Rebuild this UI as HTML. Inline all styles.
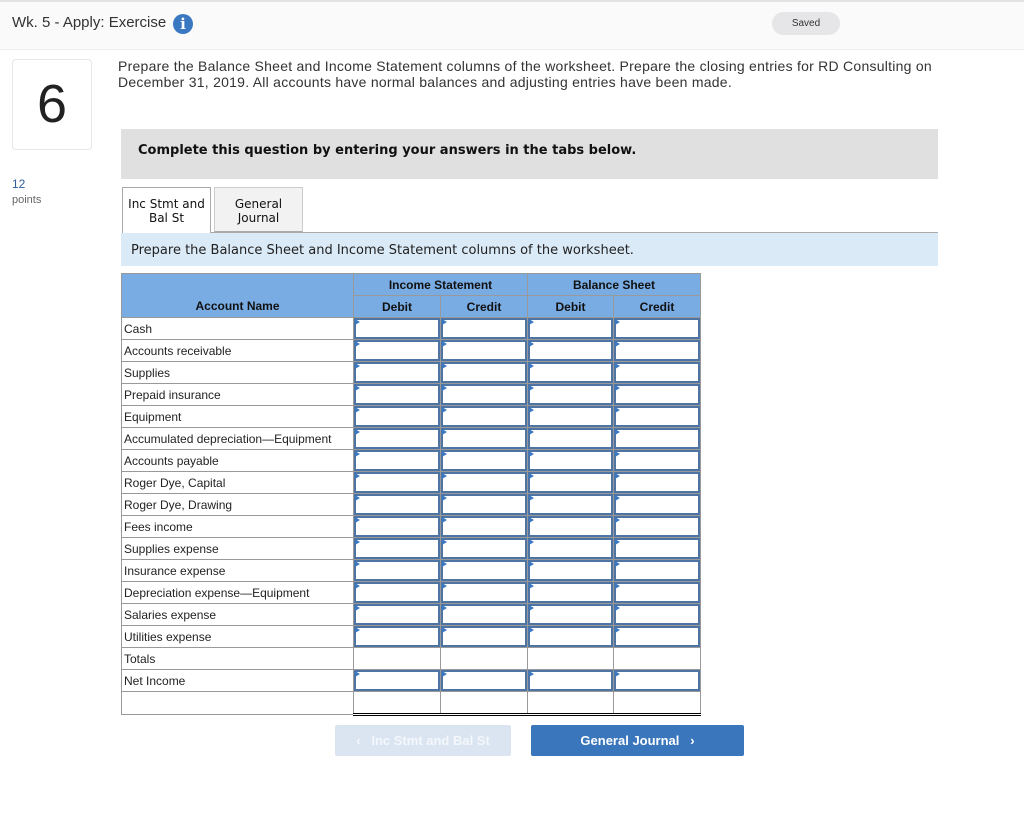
<!DOCTYPE html>
<html><head><meta charset="utf-8"><style>
body{margin:0;width:1024px;height:831px;background:#fff;font-family:"Liberation Sans",Arial,sans-serif;position:relative;overflow:hidden}
.hdr{position:absolute;left:0;top:0;width:1024px;height:47px;background:#fafafa;border-top:2px solid #e2e2e2;border-bottom:1px solid #eee}
.title{position:absolute;left:12px;top:14px;font-size:15px;color:#333}
.info{position:absolute;left:173px;top:14px;width:20px;height:20px;border-radius:50%;background:#3b78c2;color:#fff;font:bold 15px "DejaVu Serif",serif;text-align:center;line-height:20px}
.saved{position:absolute;left:772px;top:12px;width:68px;height:23px;border-radius:12px;background:#e6e6e8;font-size:10px;color:#333;text-align:center;line-height:23px}
.qbox{position:absolute;left:12px;top:59px;width:78px;height:89px;border:1px solid #e6e6e6;border-radius:4px;font-size:54px;color:#222;text-align:center;line-height:89px}
.pts{position:absolute;left:12px;top:177px;font-size:12px;color:#2f5d9a}
.pts span{display:block;color:#666;font-size:11px;margin-top:3px}
.q{position:absolute;left:118px;top:58px;width:850px;font-size:14px;line-height:16px;color:#333;letter-spacing:0.25px}
.banner{position:absolute;left:121px;top:129px;width:817px;height:50px;background:#e0e0e0;font:bold 13px "DejaVu Sans",Verdana,sans-serif;color:#111;line-height:43px;text-indent:17px}
.tab{position:absolute;top:187px;height:45px;font:12px "DejaVu Sans",Verdana,sans-serif;text-align:center;line-height:14px;box-sizing:border-box;padding-top:9px;color:#111}
.t1{left:122px;width:89px;border:1px solid #aaa;border-bottom:none;background:#fff;height:46px}
.t2{left:214px;width:89px;border:1px solid #ccc;background:#f2f2f2;border-bottom:1px solid #aaa}
.tabline{position:absolute;left:211px;top:232px;width:727px;height:1px;background:#aaa}
.bar{position:absolute;left:121px;top:233px;width:817px;height:33px;background:#dbeaf7;font:13px "DejaVu Sans",Verdana,sans-serif;color:#222;line-height:35px;text-indent:10px}
table{position:absolute;left:121px;top:273px;border-collapse:collapse;table-layout:fixed;font-size:12px;color:#222}
td,th{border:1px solid #999;height:21px;padding:0;box-sizing:content-box}
th{background:#78ace3;font-weight:bold;font-size:12px;color:#111}
td.n{padding-left:2px}
td.i{position:relative}
td.i div{position:absolute;left:0;top:0;right:0;bottom:0;border:2px solid #4d74a3}
td.i div:before{content:"";position:absolute;left:-1px;top:-1px;border-left:5px solid #3b78c2;border-top:3px solid transparent;border-bottom:3px solid transparent}
tr.last td.e{border-bottom:3px double #000}
.btn{position:absolute;top:725px;height:31px;font:bold 13px "Liberation Sans",Arial,sans-serif;color:#fff;text-align:center;line-height:31px;border-radius:2px}
.prev{left:335px;width:176px;background:#dbe5f1;color:#f4f7fb}
.next{left:531px;width:213px;background:#3a76bc}
</style></head><body>
<div class="hdr"></div>
<div class="title">Wk. 5 - Apply: Exercise</div>
<div class="info">i</div>
<div class="saved">Saved</div>
<div class="qbox">6</div>
<div class="pts">12<span>points</span></div>
<div class="q">Prepare the Balance Sheet and Income Statement columns of the worksheet. Prepare the closing entries for RD Consulting on December 31, 2019. All accounts have normal balances and adjusting entries have been made.</div>
<div class="banner">Complete this question by entering your answers in the tabs below.</div>
<div class="tab t2">General<br>Journal</div>
<div class="tabline"></div>
<div class="tab t1">Inc Stmt and<br>Bal St</div>
<div class="bar">Prepare the Balance Sheet and Income Statement columns of the worksheet.</div>
<table>
<colgroup><col style="width:232px"><col style="width:87px"><col style="width:87px"><col style="width:86px"><col style="width:87px"></colgroup>
<tr><th style="border-bottom:none"></th><th colspan="2">Income Statement</th><th colspan="2">Balance Sheet</th></tr>
<tr><th style="border-top:none">Account Name</th><th>Debit</th><th>Credit</th><th>Debit</th><th>Credit</th></tr>
<tr><td class="n">Cash</td><td class="i"><div></div></td><td class="i"><div></div></td><td class="i"><div></div></td><td class="i"><div></div></td></tr>
<tr><td class="n">Accounts receivable</td><td class="i"><div></div></td><td class="i"><div></div></td><td class="i"><div></div></td><td class="i"><div></div></td></tr>
<tr><td class="n">Supplies</td><td class="i"><div></div></td><td class="i"><div></div></td><td class="i"><div></div></td><td class="i"><div></div></td></tr>
<tr><td class="n">Prepaid insurance</td><td class="i"><div></div></td><td class="i"><div></div></td><td class="i"><div></div></td><td class="i"><div></div></td></tr>
<tr><td class="n">Equipment</td><td class="i"><div></div></td><td class="i"><div></div></td><td class="i"><div></div></td><td class="i"><div></div></td></tr>
<tr><td class="n">Accumulated depreciation—Equipment</td><td class="i"><div></div></td><td class="i"><div></div></td><td class="i"><div></div></td><td class="i"><div></div></td></tr>
<tr><td class="n">Accounts payable</td><td class="i"><div></div></td><td class="i"><div></div></td><td class="i"><div></div></td><td class="i"><div></div></td></tr>
<tr><td class="n">Roger Dye, Capital</td><td class="i"><div></div></td><td class="i"><div></div></td><td class="i"><div></div></td><td class="i"><div></div></td></tr>
<tr><td class="n">Roger Dye, Drawing</td><td class="i"><div></div></td><td class="i"><div></div></td><td class="i"><div></div></td><td class="i"><div></div></td></tr>
<tr><td class="n">Fees income</td><td class="i"><div></div></td><td class="i"><div></div></td><td class="i"><div></div></td><td class="i"><div></div></td></tr>
<tr><td class="n">Supplies expense</td><td class="i"><div></div></td><td class="i"><div></div></td><td class="i"><div></div></td><td class="i"><div></div></td></tr>
<tr><td class="n">Insurance expense</td><td class="i"><div></div></td><td class="i"><div></div></td><td class="i"><div></div></td><td class="i"><div></div></td></tr>
<tr><td class="n">Depreciation expense—Equipment</td><td class="i"><div></div></td><td class="i"><div></div></td><td class="i"><div></div></td><td class="i"><div></div></td></tr>
<tr><td class="n">Salaries expense</td><td class="i"><div></div></td><td class="i"><div></div></td><td class="i"><div></div></td><td class="i"><div></div></td></tr>
<tr><td class="n">Utilities expense</td><td class="i"><div></div></td><td class="i"><div></div></td><td class="i"><div></div></td><td class="i"><div></div></td></tr>
<tr><td class="n">Totals</td><td style="border-top:1px solid #333"></td><td style="border-top:1px solid #333"></td><td style="border-top:1px solid #333"></td><td style="border-top:1px solid #333"></td></tr>
<tr><td class="n">Net Income</td><td class="i"><div></div></td><td class="i"><div></div></td><td class="i"><div></div></td><td class="i"><div></div></td></tr>
<tr class="last"><td></td><td class="e"></td><td class="e"></td><td class="e"></td><td class="e"></td></tr>
</table>
<div class="btn prev">&lsaquo;&nbsp;&nbsp; Inc Stmt and Bal St</div>
<div class="btn next">General Journal &nbsp;&nbsp;&rsaquo;</div>
</body></html>
